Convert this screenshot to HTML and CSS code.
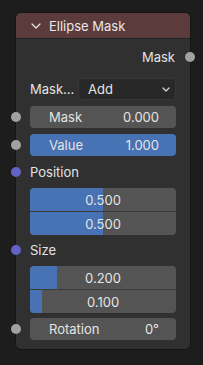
FILE: index.html
```html
<!DOCTYPE html>
<html>
<head>
<meta charset="utf-8">
<link rel="stylesheet" href="styles.css">
</head>
<body>
<div class="node">
  <div class="header">
    <svg class="chev" width="10" height="6" viewBox="0 0 10 6"><path d="M1 1 L5 5 L9 1" fill="none" stroke="#e2e2e2" stroke-width="1.3" stroke-linecap="round" stroke-linejoin="round"/></svg>
    <span class="title">Ellipse Mask</span>
  </div>
  <div class="body">
    <div class="row out r-out">
      <span>Mask</span>
      <span class="sock sock-right gray"></span>
    </div>
    <div class="row r-drop">
      <span class="dlabel">Mask...</span>
      <div class="dropdown">
        <span>Add</span>
        <svg width="8" height="5" viewBox="0 0 8 5"><path d="M1 1 L4 4 L7 1" fill="none" stroke="#d8d8d8" stroke-width="1.2" stroke-linecap="round" stroke-linejoin="round"/></svg>
      </div>
    </div>
    <div class="row field r-mask">
      <span class="sock sock-left gray"></span>
      <span class="fl">Mask</span><span class="fv">0.000</span>
    </div>
    <div class="row field blue r-value">
      <span class="sock sock-left gray"></span>
      <span class="fl">Value</span><span class="fv">1.000</span>
    </div>
    <div class="row label r-pos">
      <span class="sock sock-left purple"></span>
      <span>Position</span>
    </div>
    <div class="vec r-posf">
      <div class="vf"><div class="fill" style="width:50%"></div><span>0.500</span></div>
      <div class="vf"><div class="fill" style="width:50%"></div><span>0.500</span></div>
    </div>
    <div class="row label r-size">
      <span class="sock sock-left purple"></span>
      <span>Size</span>
    </div>
    <div class="vec r-sizef">
      <div class="vf"><div class="fill" style="width:18.5%"></div><span>0.200</span></div>
      <div class="vf"><div class="fill" style="width:8%"></div><span>0.100</span></div>
    </div>
    <div class="row field r-rot">
      <span class="sock sock-left gray"></span>
      <span class="fl">Rotation</span><span class="fv">0°</span>
    </div>
  </div>
</div>
</body>
</html>
```
FILE: styles.css
```css
html, body {
  margin: 0;
  padding: 0;
}
body {
  width: 203px;
  height: 365px;
  background: #1d1d1d;
  font-family: Inter, "Noto Sans", sans-serif;
  font-size: 13px;
  color: #e4e4e4;
  overflow: hidden;
}
.node {
  margin-left: 16px;
  margin-top: 13px;
  width: 174px;
  height: 336px;
  background: #303030;
  border-radius: 5px;
  box-shadow: 0 0 0 1px #161616;
  display: flex;
  flex-direction: column;
}
.header {
  height: 25px;
  background: #5b3b3c;
  border-radius: 5px 5px 0 0;
  border-bottom: 1px solid #242424;
  display: flex;
  align-items: center;
  box-sizing: border-box;
  height: 26px;
}
.chev {
  margin-left: 15px;
  margin-right: 8px;
  margin-top: 1px;
}
.title {
  color: #e8e8e8;
  font-size: 13px;
}
.body {
  display: flex;
  flex-direction: column;
  padding: 0 14px;
}
.row {
  position: relative;
  height: 22px;
  display: flex;
  align-items: center;
}
.out {
  justify-content: flex-end;
  padding-right: 1px;
}
.r-out { margin-top: 7px; }
.r-drop { margin-top: 10px; }
.r-mask { margin-top: 6px; }
.r-value { margin-top: 6px; }
.r-pos { margin-top: 5px; }
.r-posf { margin-top: 5px; }
.r-size { margin-top: 4px; }
.r-sizef { margin-top: 5px; }
.r-rot { margin-top: 5px; }

.sock {
  position: absolute;
  width: 10px;
  height: 10px;
  border-radius: 50%;
  top: 6px;
}
.sock-left { left: -19px; }
.sock-right { right: -19px; }
.gray { background: #a1a1a1; }
.purple { background: #6363c7; }

.dlabel {
  width: 48px;
  flex: none;
}
.dropdown {
  flex: 1;
  height: 22px;
  box-sizing: border-box;
  background: #282828;
  border: 1px solid #363636;
  border-radius: 4px;
  display: flex;
  align-items: center;
  justify-content: space-between;
  padding: 0 5px 0 9px;
}
.field {
  background: #545454;
  border-radius: 4px;
  justify-content: space-between;
  padding: 0 17px 0 19px;
}
.field.blue {
  background: #4772b3;
}
.vec {
  display: flex;
  flex-direction: column;
  border-radius: 4px;
  overflow: hidden;
  background: #545454;
}
.vf {
  position: relative;
  height: 23px;
  display: flex;
  align-items: center;
  justify-content: center;
}
.vf + .vf {
  border-top: 1px solid #3a3a3a;
}
.fill {
  position: absolute;
  left: 0;
  top: 0;
  bottom: 0;
  background: #4772b3;
}
.vf span {
  position: relative;
}
```
